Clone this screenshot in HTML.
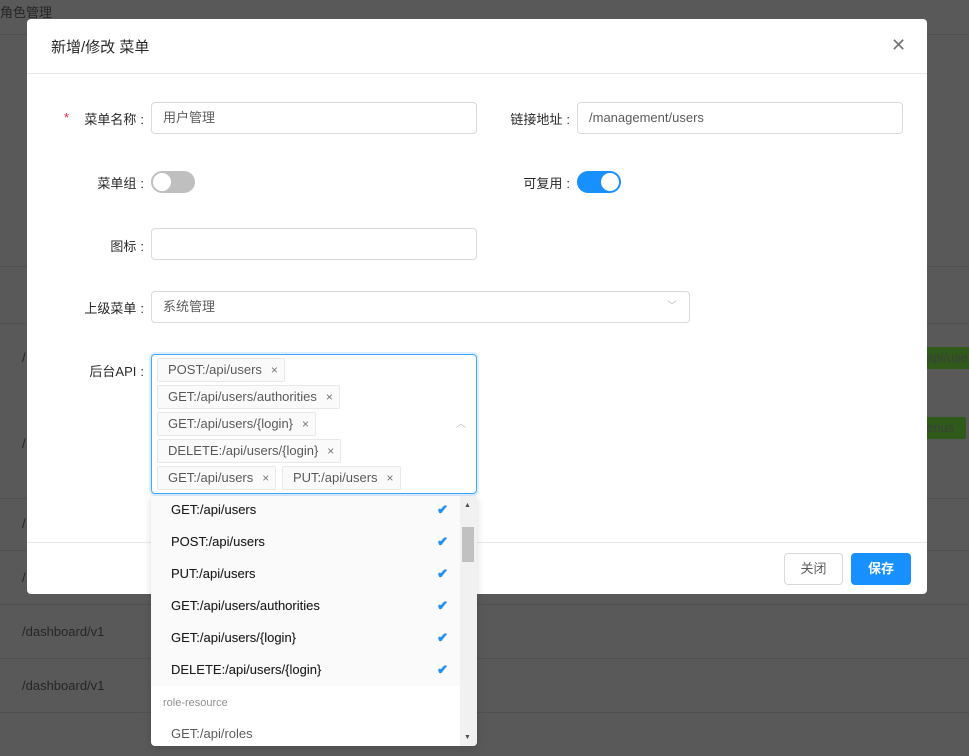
<!DOCTYPE html>
<html><head><meta charset="utf-8"><style>
*{box-sizing:border-box;margin:0;padding:0}
body{width:969px;height:756px;overflow:hidden;background:#595959;font-family:"Liberation Sans","Noto Sans CJK SC",sans-serif;font-size:13px;color:rgba(0,0,0,.65);position:relative}
.a{position:absolute}
.bgline{position:absolute;left:0;width:969px;height:1px;background:#505050}
.bgt{position:absolute;color:#262626;font-size:13px}
.modal{left:27px;top:19px;width:900px;height:575px;background:#fff;border-radius:4px}
.lbl{position:absolute;text-align:right;width:120px;color:rgba(0,0,0,.85);font-size:13px}
.lbl i{font-style:normal;margin-left:4px}
.inp{position:absolute;height:32px;border:1px solid #d9d9d9;border-radius:4px;padding:0 11px;line-height:30px;font-size:13px;color:rgba(0,0,0,.65)}
.tag{position:absolute;height:24px;background:#fafafa;border:1px solid #e8e8e8;border-radius:2px;padding:0 22px 0 10px;line-height:22px;font-size:13px;color:rgba(0,0,0,.65)}
.tag:after{content:"×";position:absolute;right:6px;top:0;font-size:12px;color:rgba(0,0,0,.55)}
.opt{position:absolute;left:0;width:309px;height:32px;line-height:32px;padding-left:20px;font-size:13px;color:rgba(0,0,0,.65)}
.sel{background:#fafafa;color:rgba(0,0,0,.72);text-shadow:0 0 0.4px rgba(0,0,0,.6)}
.ck{position:absolute;right:12px;top:0;color:#1890ff;font-weight:bold;font-size:13px}
</style></head><body>
<div class="bgt" style="left:0;top:2px">角色管理</div>
<div class="bgline" style="top:34px"></div>
<div class="bgline" style="top:266px"></div>
<div class="bgline" style="top:323px"></div>
<div class="bgline" style="top:498px"></div>
<div class="bgline" style="top:550px"></div>
<div class="bgline" style="top:604px"></div>
<div class="bgline" style="top:658px"></div>
<div class="bgline" style="top:712px"></div>
<div class="bgt" style="left:22px;top:350px">/</div>
<div class="bgt" style="left:22px;top:436px">/</div>
<div class="bgt" style="left:22px;top:516px">/</div>
<div class="bgt" style="left:22px;top:570px">/</div>
<div class="bgt" style="left:22px;top:624px">/dashboard/v1</div>
<div class="bgt" style="left:22px;top:678px">/dashboard/v1</div>
<div class="a" style="left:922px;top:347px;width:47px;height:22px;background:#2f5a1a;color:#3e3e3e;line-height:22px;padding-left:4px">api/use</div>
<div class="a" style="left:918px;top:417px;width:48px;height:22px;background:#2f5a1a;border-radius:2px;color:#3e3e3e;line-height:22px;padding-left:8px">enus</div>

<div class="a modal">
  <div class="a" style="left:24px;top:17px;font-size:15px;color:rgba(0,0,0,.85)">新增/修改 菜单</div>
  <div class="a" style="left:864px;top:16px;font-size:18px;color:rgba(0,0,0,.55)">✕</div>
  <div class="a" style="left:0;top:54px;width:900px;height:1px;background:#e8e8e8"></div>
  <div class="a" style="left:0;top:523px;width:900px;height:1px;background:#e8e8e8"></div>
  <div class="a" style="left:757px;top:534px;width:59px;height:32px;border:1px solid #d9d9d9;border-radius:4px;text-align:center;line-height:30px">关闭</div>
  <div class="a" style="left:824px;top:534px;width:60px;height:32px;background:#1890ff;border-radius:4px;text-align:center;line-height:32px;color:#fff;font-weight:bold">保存</div>
</div>

<span class="a" style="left:64px;top:110px;color:#f5222d">*</span>
<div class="lbl" style="left:24px;top:109px">菜单名称<i>:</i></div>
<div class="inp" style="left:151px;top:102px;width:326px">用户管理</div>
<div class="lbl" style="left:450px;top:109px">链接地址<i>:</i></div>
<div class="inp" style="left:577px;top:102px;width:326px">/management/users</div>

<div class="lbl" style="left:24px;top:173px">菜单组<i>:</i></div>
<div class="a" style="left:151px;top:171px;width:44px;height:22px;border-radius:11px;background:#bfbfbf"><div class="a" style="left:2px;top:2px;width:18px;height:18px;border-radius:9px;background:#fff"></div></div>
<div class="lbl" style="left:450px;top:173px">可复用<i>:</i></div>
<div class="a" style="left:577px;top:171px;width:44px;height:22px;border-radius:11px;background:#1890ff"><div class="a" style="left:24px;top:2px;width:18px;height:18px;border-radius:9px;background:#fff"></div></div>

<div class="lbl" style="left:24px;top:236px">图标<i>:</i></div>
<div class="inp" style="left:151px;top:228px;width:326px"></div>

<div class="lbl" style="left:24px;top:298px">上级菜单<i>:</i></div>
<div class="inp" style="left:151px;top:291px;width:539px">系统管理<span style="position:absolute;right:12px;top:0;font-size:10px;color:#bbb">﹀</span></div>

<div class="lbl" style="left:24px;top:361px">后台API<i>:</i></div>
<div class="a" style="left:151px;top:354px;width:326px;height:140px;border:1px solid #40a9ff;border-radius:4px;box-shadow:0 0 0 2px rgba(24,144,255,.15)">
  <span class="a" style="right:10px;top:60px;font-size:10px;color:#bbb">︿</span>
</div>
<div class="tag" style="left:157px;top:358px">POST:/api/users</div>
<div class="tag" style="left:157px;top:385px">GET:/api/users/authorities</div>
<div class="tag" style="left:157px;top:412px">GET:/api/users/{login}</div>
<div class="tag" style="left:157px;top:439px">DELETE:/api/users/{login}</div>
<div class="tag" style="left:157px;top:466px">GET:/api/users</div>
<div class="tag" style="left:282px;top:466px">PUT:/api/users</div>

<div class="a" style="left:151px;top:496px;width:326px;height:250px;background:#fff;border-radius:0 0 4px 4px;box-shadow:0 2px 8px rgba(0,0,0,.15);overflow:hidden">
  <div class="opt sel" style="top:-2px">GET:/api/users<span class="ck">✔</span></div>
  <div class="opt sel" style="top:30px">POST:/api/users<span class="ck">✔</span></div>
  <div class="opt sel" style="top:62px">PUT:/api/users<span class="ck">✔</span></div>
  <div class="opt sel" style="top:94px">GET:/api/users/authorities<span class="ck">✔</span></div>
  <div class="opt sel" style="top:126px">GET:/api/users/{login}<span class="ck">✔</span></div>
  <div class="opt sel" style="top:158px">DELETE:/api/users/{login}<span class="ck">✔</span></div>
  <div class="opt" style="top:191px;padding-left:12px;font-size:11px;color:rgba(0,0,0,.45)">role-resource</div>
  <div class="opt" style="top:222px">GET:/api/roles</div>
  <div class="a" style="left:309px;top:0;width:17px;height:250px;background:#f1f1f1"></div>
  <div class="a" style="left:311px;top:31px;width:12px;height:35px;background:#c1c1c1"></div>
  <div class="a" style="left:313px;top:6px;font-size:7px;color:#505050">▲</div>
  <div class="a" style="left:313px;top:238px;font-size:7px;color:#505050">▼</div>
</div>
</body></html>
